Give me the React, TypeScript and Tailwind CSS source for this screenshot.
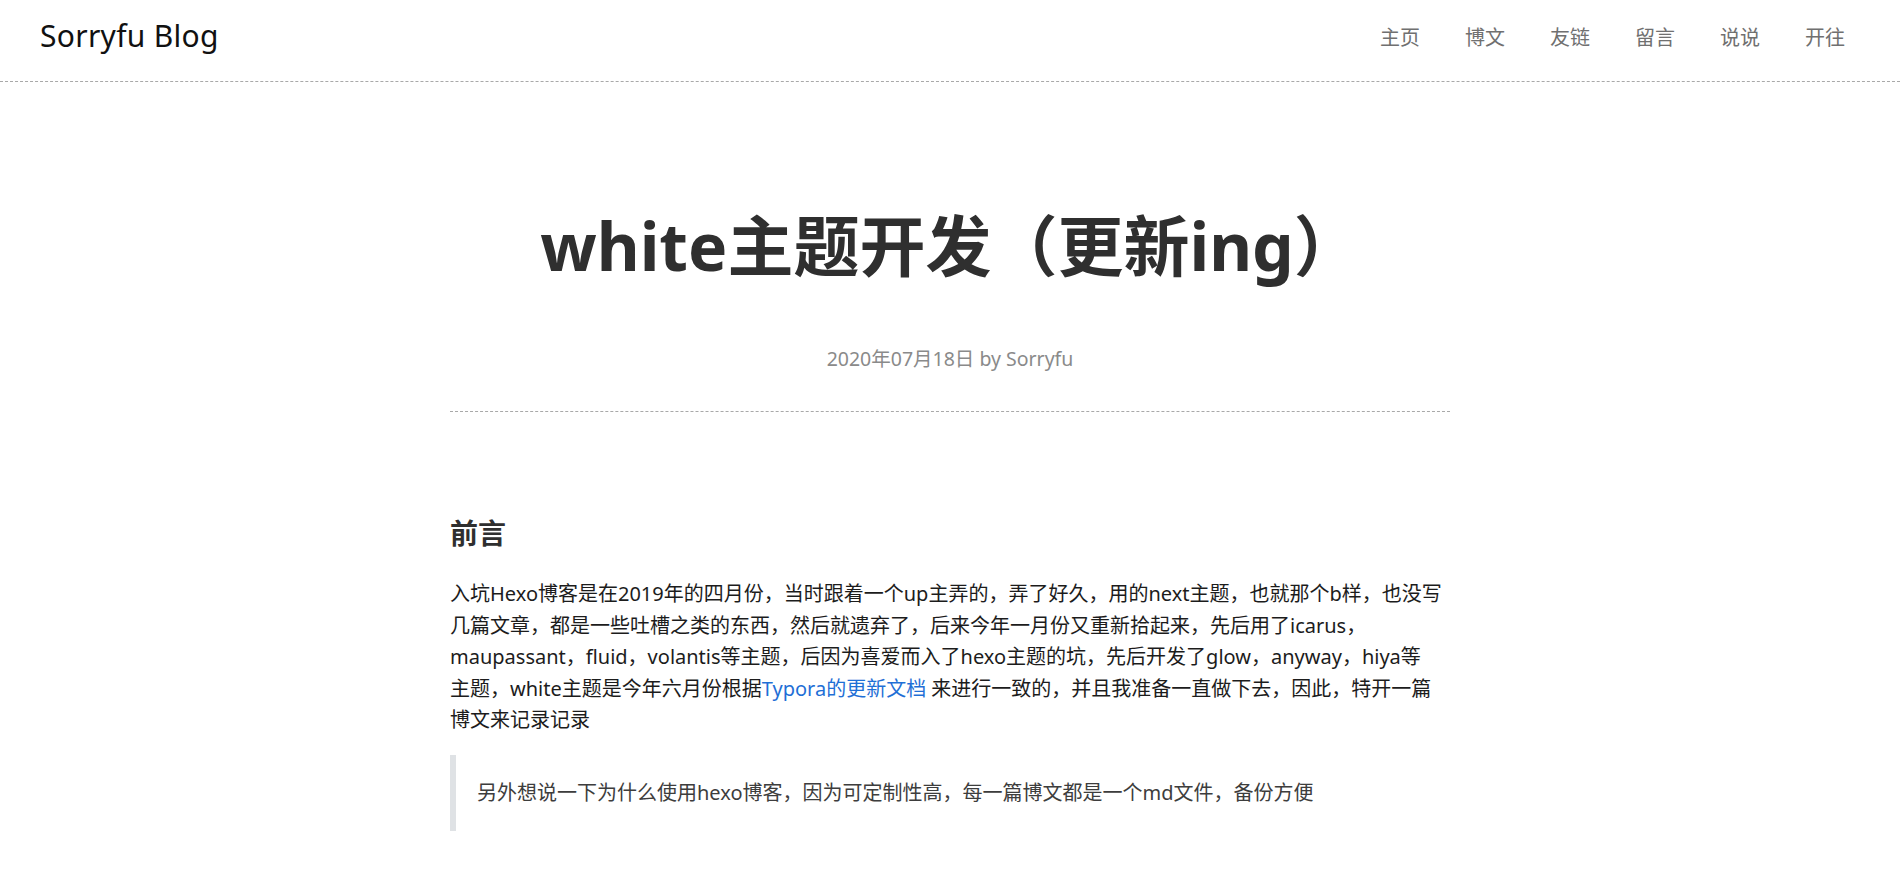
const navItems = ["主页", "博文", "友链", "留言", "说说", "开往"];

const font = { fontFamily: '"Noto Sans", "Noto Sans CJK SC", sans-serif' };

function Header() {
  return (
    <header className="flex h-[82px] items-center justify-between border-b border-dashed border-[#a9a9a9] pl-[40px] pr-[55px]">
      <a href="#" className="pb-[10px] text-[30px] leading-none text-[#111] tracking-[0.3px]">
        Sorryfu Blog
      </a>
      <nav className="flex items-center gap-[45px] pb-[6px]">
        {navItems.map((item) => (
          <a key={item} href="#" className="text-[20px] leading-none text-[#707070] hover:text-[#222]">
            {item}
          </a>
        ))}
      </nav>
    </header>
  );
}

export default function App() {
  return (
    <div className="min-h-screen bg-white text-[#222]" style={font}>
      <Header />
      <main className="mx-auto w-[1000px]">
        <div className="border-b border-dashed border-[#a9a9a9] pb-[38px] text-center">
          <h1 className="mt-[121px] text-[66px] font-bold leading-[84px] text-[#2f2f2f]">
            white主题开发（更新ing）
          </h1>
          <p className="mt-[58px] text-[19.5px] leading-[28px] text-[#8a8a8a]">2020年07月18日 by Sorryfu</p>
        </div>

        <article className="pt-[100px]">
          <h2 className="text-[28px] font-bold leading-[42px] text-[#2f2f2f]">前言</h2>
          <p className="mt-[24px] text-[20px] leading-[31.5px] text-[#1c1c1c]">
            入坑Hexo博客是在2019年的四月份，当时跟着一个up主弄的，弄了好久，用的next主题，也就那个b样，也没写
            <br />
            几篇文章，都是一些吐槽之类的东西，然后就遗弃了，后来今年一月份又重新拾起来，先后用了icarus，
            <br />
            maupassant，fluid，volantis等主题，后因为喜爱而入了hexo主题的坑，先后开发了glow，anyway，hiya等
            <br />
            主题，white主题是今年六月份根据
            <a href="#" className="text-[#1f6fd6]">
              Typora的更新文档
            </a>{" "}
            来进行一致的，并且我准备一直做下去，因此，特开一篇
            <br />
            博文来记录记录
          </p>
          <blockquote className="mt-[19px] border-l-[6px] border-[#dfe2e5] py-[22px] pl-[21px] text-[20px] leading-[32px] text-[#3d3d3d]">
            另外想说一下为什么使用hexo博客，因为可定制性高，每一篇博文都是一个md文件，备份方便
          </blockquote>
        </article>
      </main>
    </div>
  );
}
